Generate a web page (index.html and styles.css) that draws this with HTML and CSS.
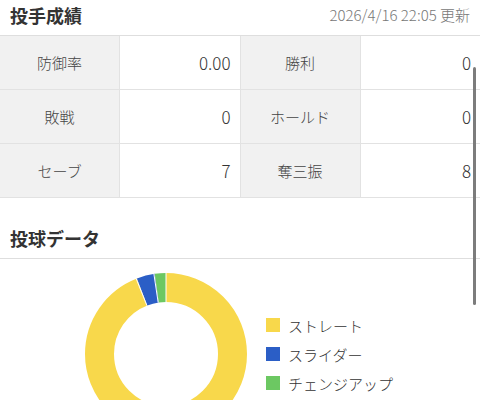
FILE: index.html
```html
<!DOCTYPE html>
<html lang="ja">
<head>
<meta charset="utf-8">
<title>投手成績</title>
<link rel="stylesheet" href="styles.css">
</head>
<body>
<section class="section">
  <header class="sec-head">
    <h2 class="sec-title">投手成績</h2>
    <span class="updated">2026/4/16 22:05 更新</span>
  </header>
  <div class="stats">
    <div class="label">防御率</div><div class="value">0.00</div>
    <div class="label">勝利</div><div class="value">0</div>
    <div class="label">敗戦</div><div class="value">0</div>
    <div class="label">ホールド</div><div class="value">0</div>
    <div class="label">セーブ</div><div class="value">7</div>
    <div class="label">奪三振</div><div class="value">8</div>
  </div>
</section>
<section class="section section-2">
  <header class="sec-head">
    <h2 class="sec-title">投球データ</h2>
  </header>
  <div class="chart-area">
    <svg class="donut" width="162" height="162" viewBox="0 0 162 162">
      <g transform="rotate(-90 81 81)">
        <circle cx="81" cy="81" r="66.5" fill="none" stroke="#f8d84b" stroke-width="29" stroke-dasharray="392.76 25.07"/>
        <circle cx="81" cy="81" r="66.5" fill="none" stroke="#2b5ec6" stroke-width="29" stroke-dasharray="15.04 402.79" stroke-dashoffset="-392.76"/>
        <circle cx="81" cy="81" r="66.5" fill="none" stroke="#6cc862" stroke-width="29" stroke-dasharray="10.03 407.8" stroke-dashoffset="-407.8"/>
      </g>
      <g stroke="#ffffff" stroke-width="1">
        <line x1="81" y1="29" x2="81" y2="0"/>
        <line x1="61.9" y1="32.6" x2="51.2" y2="5.7"/>
        <line x1="73.2" y1="29.6" x2="68.9" y2="0.9"/>
      </g>
    </svg>
    <ul class="legend">
      <li class="legend-item"><span class="swatch swatch-yellow"></span>ストレート</li>
      <li class="legend-item"><span class="swatch swatch-blue"></span>スライダー</li>
      <li class="legend-item"><span class="swatch swatch-green"></span>チェンジアップ</li>
    </ul>
  </div>
</section>
<div class="scrollbar"></div>
</body>
</html>
```
FILE: styles.css
```css
* { box-sizing: border-box; }
html, body { margin: 0; padding: 0; }
body {
  width: 480px;
  height: 400px;
  overflow: hidden;
  background: #ffffff;
  font-family: "Noto Sans CJK JP", "Noto Sans", sans-serif;
  color: #333333;
  position: relative;
}
.sec-head {
  height: 36px;
  display: flex;
  align-items: center;
  justify-content: space-between;
  padding: 0 10px 6px 10px;
  border-bottom: 1px solid #dedede;
}
.sec-title {
  margin: 0;
  font-size: 18px;
  font-weight: 700;
  color: #333333;
  line-height: 1;
}
.updated {
  font-size: 15px;
  font-weight: 300;
  color: #777777;
  line-height: 1;
}
.stats {
  display: grid;
  grid-template-columns: 1fr 1fr 1fr 1fr;
  grid-auto-rows: 53px;
  gap: 1px;
  background: #e2e2e2;
  border-bottom: 1px solid #e2e2e2;
}
.label {
  background: #f1f1f1;
  display: flex;
  align-items: center;
  justify-content: center;
  font-size: 15px;
  font-weight: 300;
  color: #444444;
}
.value {
  background: #ffffff;
  display: flex;
  align-items: center;
  justify-content: flex-end;
  padding-right: 9px;
  font-size: 17px;
  font-weight: 300;
  color: #333333;
}
.section-2 { margin-top: 25px; }
.chart-area {
  display: flex;
  align-items: center;
  padding: 14px 0 0 85px;
  gap: 19px;
}
.donut { display: block; flex: none; }
.legend {
  list-style: none;
  margin: 0;
  padding: 0;
  display: flex;
  flex-direction: column;
  gap: 8px;
}
.legend-item {
  display: flex;
  align-items: center;
  height: 21px;
  font-size: 15px;
  font-weight: 300;
  color: #333333;
}
.swatch {
  width: 14px;
  height: 14px;
  margin-right: 8px;
  flex: none;
}
.swatch-yellow { background: #f8d84b; }
.swatch-blue { background: #2b5ec6; }
.swatch-green { background: #6cc862; }
.scrollbar {
  position: absolute;
  left: 473px;
  top: 67px;
  width: 3px;
  height: 238px;
  border-radius: 2px;
  background: #7c7c7c;
}
```
